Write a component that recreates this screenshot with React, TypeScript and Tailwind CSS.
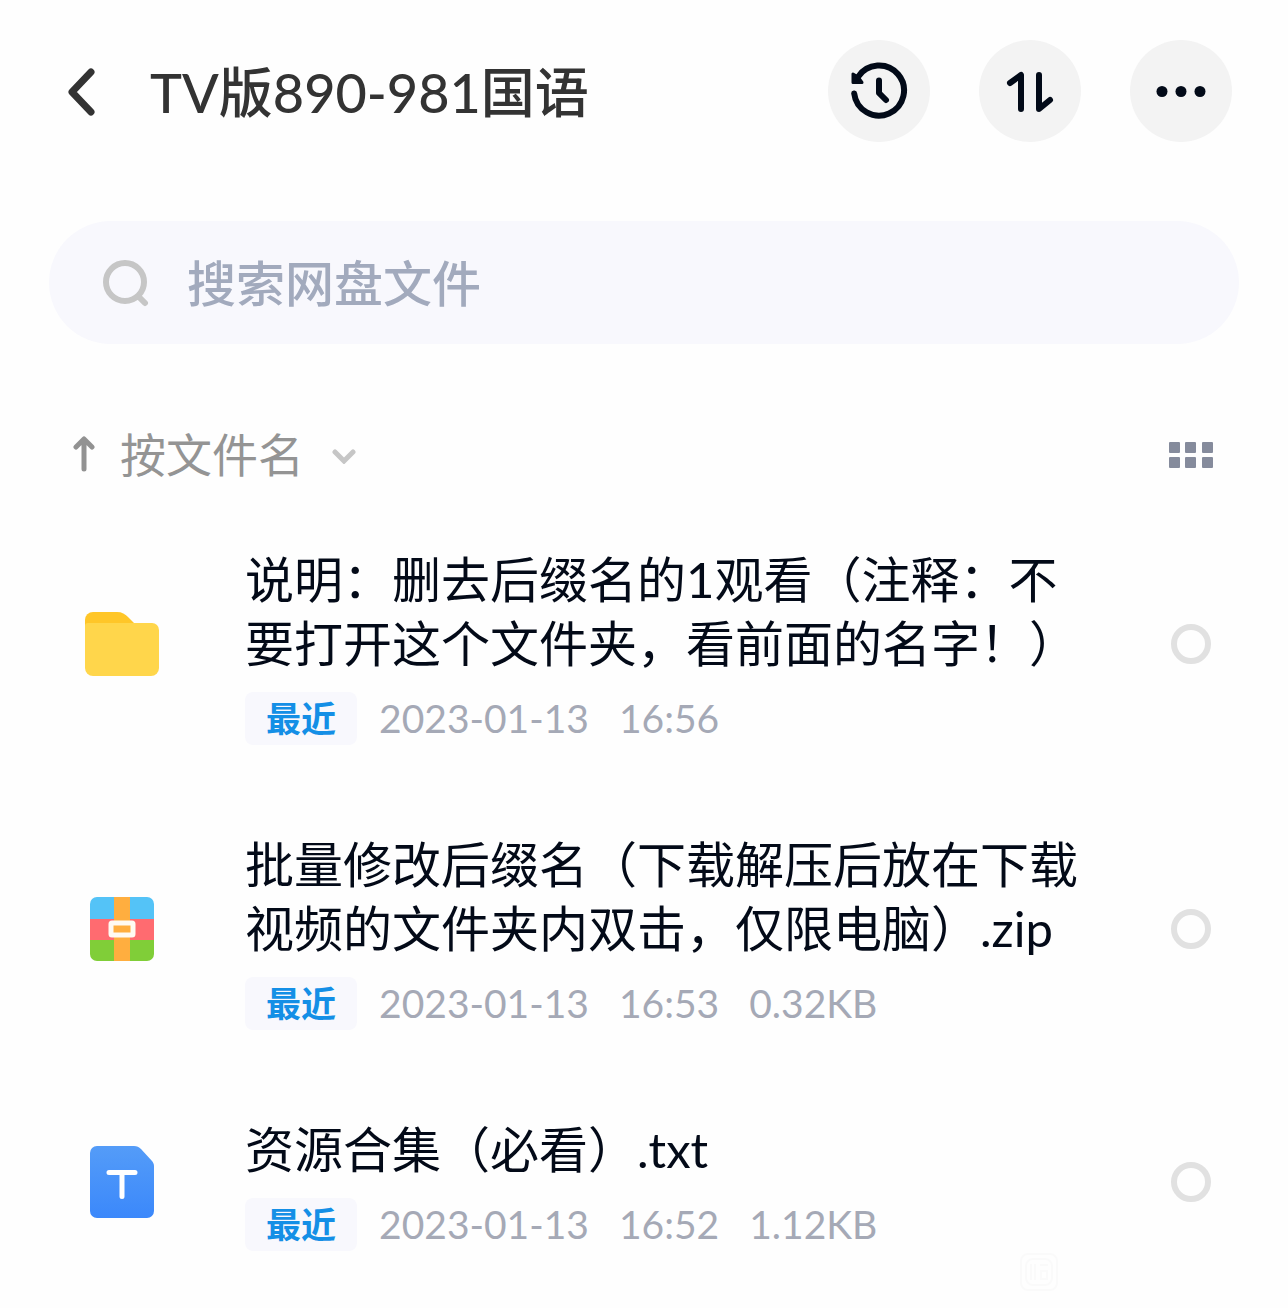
import { useState } from "react";

type FileKind = "folder" | "zip" | "txt";

interface FileItem {
  id: string;
  kind: FileKind;
  name: string;
  date: string;
  time: string;
  size?: string;
}

const FILES: FileItem[] = [
  {
    id: "f1",
    kind: "folder",
    name: "说明：删去后缀名的1观看（注释：不要打开这个文件夹，看前面的名字！）",
    date: "2023-01-13",
    time: "16:56",
  },
  {
    id: "f2",
    kind: "zip",
    name: "批量修改后缀名（下载解压后放在下载视频的文件夹内双击，仅限电脑）.zip",
    date: "2023-01-13",
    time: "16:53",
    size: "0.32KB",
  },
  {
    id: "f3",
    kind: "txt",
    name: "资源合集（必看）.txt",
    date: "2023-01-13",
    time: "16:52",
    size: "1.12KB",
  },
];

function FolderIcon() {
  return (
    <svg width="76" height="66" viewBox="0 0 76 66" aria-hidden="true">
      <path d="M1 9a8 8 0 0 1 8-8h24c5 0 8 2 11 5l6 6v14H1z" fill="#ffc628" />
      <path d="M1 15a3 3 0 0 1 3-3h64a7 7 0 0 1 7 7v38a8 8 0 0 1-8 8H9a8 8 0 0 1-8-8z" fill="#ffd64b" />
    </svg>
  );
}

function ZipIcon() {
  return (
    <svg width="66" height="66" viewBox="0 0 66 66" aria-hidden="true">
      <path d="M1 23V8a7 7 0 0 1 7-7h50a7 7 0 0 1 7 7v15z" fill="#54c3f7" />
      <path d="M1 23h64v21H1z" fill="#ff6b70" />
      <path d="M1 44h64v14a7 7 0 0 1-7 7H8a7 7 0 0 1-7-7z" fill="#80ce38" />
      <path d="M25 1h16v64H25z" fill="#ffae3f" />
      <rect x="22" y="27" width="22" height="12" rx="1" fill="#ffae3f" stroke="#fffaf2" strokeWidth="5" />
    </svg>
  );
}

function TxtIcon() {
  return (
    <svg width="66" height="74" viewBox="0 0 66 74" aria-hidden="true">
      <defs>
        <linearGradient id="txt-fill" x1="0" y1="0" x2="0" y2="1">
          <stop offset="0" stopColor="#549cf8" />
          <stop offset="1" stopColor="#3b88fb" />
        </linearGradient>
      </defs>
      <path
        d="M8 1h37c3 0 5 1 7 3l11 12c1 1 2 3 2 5v45a7 7 0 0 1-7 7H8a7 7 0 0 1-7-7V8a7 7 0 0 1 7-7z"
        fill="url(#txt-fill)"
      />
      <path d="M20 27.500h26M33 27.500v24" fill="none" stroke="#fff" strokeWidth="5" strokeLinecap="round" />
    </svg>
  );
}

function FileIcon({ kind }: { kind: FileKind }) {
  if (kind === "folder") return <FolderIcon />;
  if (kind === "zip") return <ZipIcon />;
  return <TxtIcon />;
}

const roundButton =
  "flex size-[102px] shrink-0 items-center justify-center rounded-full bg-[#f3f3f3] text-[#020a18]";

export default function App() {
  const [query, setQuery] = useState("");
  const [ascending, setAscending] = useState(true);
  const [selected, setSelected] = useState<string[]>([]);

  const toggle = (id: string) =>
    setSelected((prev) => (prev.includes(id) ? prev.filter((x) => x !== id) : [...prev, id]));

  const files = FILES.filter((f) => f.name.includes(query));

  return (
    <div
      lang="zh-CN"
      className="relative min-h-screen bg-[#fefefe] pt-10 pb-14 font-['Lato','Noto_Sans_CJK_SC',sans-serif] text-[#030a18]"
    >
      {/* Header */}
      <header className="flex items-center pr-14 pl-16">
        <button aria-label="返回" className="flex w-9 shrink-0">
          <svg width="32" height="50" viewBox="0 0 32 50" fill="none" stroke="#333" strokeWidth="7" strokeLinecap="round" strokeLinejoin="round">
            <path d="M27 6 8 26l19 20" />
          </svg>
        </button>
        <h1 className="ml-[50px] min-w-0 flex-1 truncate pt-1 text-[54px] leading-[80px] font-medium text-[#333]">
          TV版890-981国语
        </h1>
        <div className="flex gap-[49px]">
          <button aria-label="历史记录" className={roundButton}>
            <svg width="60" height="60" viewBox="0 0 60 60" fill="none" stroke="currentColor" strokeWidth="6" strokeLinecap="round" strokeLinejoin="round">
              <path d="M5.200 32.500A25 25 0 1 0 9 16" />
              <path d="M4 13v8.500h9L9 16z" fill="currentColor" strokeWidth="3" />
              <path d="M30 19.500v12.500l7 7" />
            </svg>
          </button>
          <button aria-label="排序" className={roundButton}>
            <svg width="50" height="44" viewBox="0 0 50 44" fill="none" stroke="currentColor" strokeWidth="6" strokeLinecap="round" strokeLinejoin="round">
              <path d="M5 14 16 6v34" />
              <path d="M34 6v34l11-9" />
            </svg>
          </button>
          <button aria-label="更多" className={roundButton}>
            <svg width="52" height="12" viewBox="0 0 52 12" fill="currentColor">
              <circle cx="7" cy="6.500" r="5.500" />
              <circle cx="26" cy="6.500" r="5.500" />
              <circle cx="45" cy="6.500" r="5.500" />
            </svg>
          </button>
        </div>
      </header>

      {/* Search */}
      <label className="mx-[49px] mt-[79px] flex h-[123px] items-center rounded-full bg-[#f8f8fd] pr-12 pl-[54px]">
        <svg width="48" height="48" viewBox="0 0 48 48" fill="none" stroke="#c6c6c6" strokeWidth="6" strokeLinecap="round" aria-hidden="true">
          <circle cx="22" cy="23" r="19" />
          <path d="m36 38 6 6" />
        </svg>
        <input
          type="text"
          aria-label="搜索网盘文件"
          placeholder="搜索网盘文件"
          value={query}
          onChange={(e) => setQuery(e.target.value)}
          className="ml-9 h-20 min-w-0 flex-1 bg-transparent text-[49px] font-medium outline-none placeholder:text-[#a2aabd] placeholder:opacity-100"
        />
      </label>

      {/* Sort bar */}
      <div className="mt-[79px] flex h-16 items-center pr-[74px] pl-[73px]">
        <button aria-label={ascending ? "升序" : "降序"} onClick={() => setAscending((a) => !a)}>
          <svg width="22" height="38" viewBox="0 0 22 38" fill="none" stroke="#929292" strokeWidth="5" strokeLinecap="round" strokeLinejoin="round">
            <path d="M11 33V4M3 11l8-8 8 8" />
          </svg>
        </button>
        <div className="ml-[25px] grid items-center">
          <select
            aria-label="排序方式"
            className="col-start-1 row-start-1 h-16 appearance-none bg-transparent pr-[52px] text-[46px] leading-[64px] text-[#949494] outline-none"
          >
            <option>按文件名</option>
          </select>
          <svg className="pointer-events-none col-start-1 row-start-1 justify-self-end" width="24" height="18" viewBox="0 0 24 18" fill="none" stroke="#c6c6c6" strokeWidth="5" strokeLinecap="round" aria-hidden="true">
            <path d="m3 6 9 9 9-9" />
          </svg>
        </div>
        <button aria-label="网格视图" className="ml-auto">
          <svg width="46" height="28" viewBox="0 0 46 28" fill="#858b9c">
            <rect x="1" y="1" width="11" height="11" rx="1" />
            <rect x="17" y="1" width="11" height="11" rx="1" />
            <rect x="34" y="1" width="11" height="11" rx="1" />
            <rect x="1" y="16" width="11" height="11" rx="1" />
            <rect x="17" y="16" width="11" height="11" rx="1" />
            <rect x="34" y="16" width="11" height="11" rx="1" />
          </svg>
        </button>
      </div>

      {/* File list */}
      <ul className="mt-[60px] flex flex-col gap-[87px] pr-[77px] pl-[76px]">
        {files.map((file) => (
          <li key={file.id} className="flex items-center">
            <div className="flex w-[92px] shrink-0 justify-center pb-1">
              <FileIcon kind={file.kind} />
            </div>
            <div className="mr-[76px] ml-[77px] min-w-0 flex-1">
              <label htmlFor={file.id} className="block text-[49px] leading-[64px] break-all">
                {file.name}
              </label>
              <div className="mt-[17px] flex h-[53px] items-center text-[39px] text-[#a5a9b6]">
                <span className="mr-[22px] flex h-[53px] items-center rounded-lg bg-[#f8f8fd] px-[21px] text-[35px] font-bold text-[#148fe6]">
                  最近
                </span>
                <span className="mr-[30px]">{file.date}</span>
                <span className="mr-[30px]">{file.time}</span>
                {file.size && <span>{file.size}</span>}
              </div>
            </div>
            <input
              id={file.id}
              type="checkbox"
              checked={selected.includes(file.id)}
              onChange={() => toggle(file.id)}
              className="mb-1 size-10 shrink-0 appearance-none rounded-full border-6 border-[#e1e1e1] checked:border-[#148fe6] checked:bg-[#148fe6]"
            />
          </li>
        ))}
      </ul>

      {/* Corner stamp */}
      <svg className="pointer-events-none absolute right-[230px] bottom-4 text-[#fafafa]" width="38" height="40" viewBox="0 0 38 40" fill="none" stroke="currentColor" strokeWidth="2" aria-hidden="true">
        <rect x="1" y="2" width="36" height="36" rx="7" />
        <rect x="6" y="7" width="26" height="26" rx="7" />
        <path d="M11 12v16M15 12v16M20 13h8M21 19h6v8h-6z" />
      </svg>
    </div>
  );
}
